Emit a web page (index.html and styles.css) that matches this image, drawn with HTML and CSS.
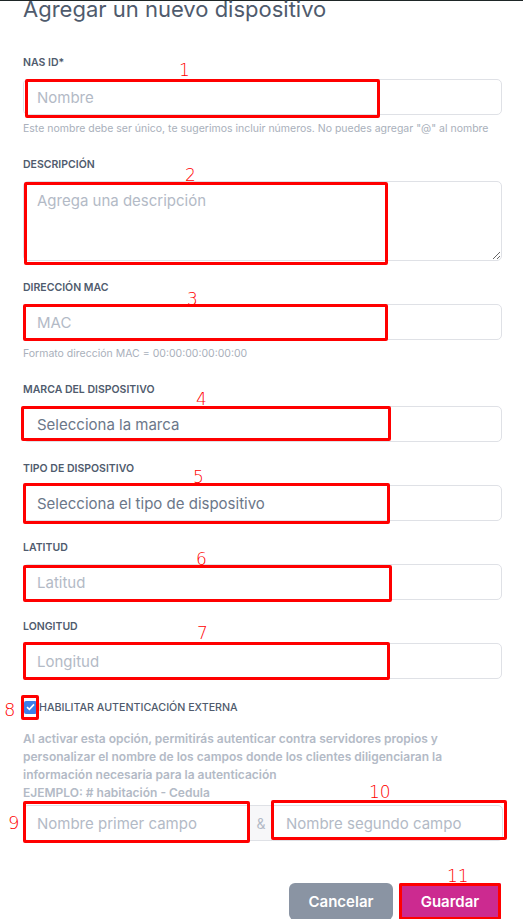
FILE: index.html
```html
<!DOCTYPE html>
<html>
  <head>
    <meta charset="utf-8">
    <title>Agregar un nuevo dispositivo</title>
    <link rel="stylesheet" href="styles.css">
  </head>
  <body>
    <div class="topline"></div>
    <div class="modal">
      <h1 class="title">Agregar un nuevo dispositivo</h1>

      <div class="field">
        <label class="label">NAS ID*</label>
        <div class="control">
          <input class="input" type="text" placeholder="Nombre">
          <span class="mark mark-1"><i>1</i></span>
        </div>
        <p class="help">Este nombre debe ser único, te sugerimos incluir números. No puedes agregar "@" al nombre</p>
      </div>

      <div class="field">
        <label class="label">DESCRIPCIÓN</label>
        <div class="control">
          <textarea class="input textarea" placeholder="Agrega una descripción"></textarea>
          <span class="mark mark-2"><i>2</i></span>
        </div>
      </div>

      <div class="field">
        <label class="label">DIRECCIÓN MAC</label>
        <div class="control">
          <input class="input" type="text" placeholder="MAC">
          <span class="mark mark-3"><i>3</i></span>
        </div>
        <p class="help">Formato dirección MAC = 00:00:00:00:00:00</p>
      </div>

      <div class="field">
        <label class="label">MARCA DEL DISPOSITIVO</label>
        <div class="control">
          <div class="input select">Selecciona la marca</div>
          <span class="mark mark-4"><i>4</i></span>
        </div>
      </div>

      <div class="field">
        <label class="label">TIPO DE DISPOSITIVO</label>
        <div class="control">
          <div class="input select">Selecciona el tipo de dispositivo</div>
          <span class="mark mark-5"><i>5</i></span>
        </div>
      </div>

      <div class="field">
        <label class="label">LATITUD</label>
        <div class="control">
          <input class="input" type="text" placeholder="Latitud">
          <span class="mark mark-6"><i>6</i></span>
        </div>
      </div>

      <div class="field">
        <label class="label">LONGITUD</label>
        <div class="control">
          <input class="input" type="text" placeholder="Longitud">
          <span class="mark mark-7"><i>7</i></span>
        </div>
      </div>

      <div class="check-row">
        <span class="check-wrap">
          <span class="checkbox">
            <svg width="9" height="8" viewBox="0 0 9 8"><path d="M1 4.2 L3.4 6.4 L8 1.4" fill="none" stroke="#fff" stroke-width="1.6"/></svg>
          </span>
          <span class="mark mark-8"><i>8</i></span>
        </span>
        <span class="check-label">HABILITAR AUTENTICACIÓN EXTERNA</span>
      </div>

      <p class="note">Al activar esta opción, permitirás autenticar contra servidores propios y personalizar el nombre de los campos donde los clientes diligenciaran la información necesaria para la autenticación<br>EJEMPLO: # habitación - Cedula</p>

      <div class="group">
        <div class="control group-first">
          <input class="input" type="text" placeholder="Nombre primer campo">
          <span class="mark mark-9"><i>9</i></span>
        </div>
        <span class="addon">&amp;</span>
        <div class="control group-last">
          <input class="input" type="text" placeholder="Nombre segundo campo">
          <span class="mark mark-10"><i>10</i></span>
        </div>
      </div>

      <div class="actions">
        <button class="btn btn-cancel">Cancelar</button>
        <div class="control">
          <button class="btn btn-save">Guardar</button>
          <span class="mark mark-11"><i>11</i></span>
        </div>
      </div>
    </div>
  </body>
</html>
```

FILE: styles.css
```css
* {
  box-sizing: border-box;
}

html, body {
  margin: 0;
  padding: 0;
  background: #fff;
  overflow: hidden;
}

body {
  font-family: Inter, "Open Sans", sans-serif;
  color: #4a5568;
}

.topline {
  height: 1px;
  background: #1e2627;
}

.modal {
  padding: 0 21px 0 23px;
}

.title {
  margin: -6px 0 0;
  font-size: 22px;
  font-weight: 400;
  line-height: 28px;
  color: #4f5b6d;
}

.field {
  margin-bottom: 20px;
}

.field:first-of-type {
  margin-top: 33px;
}

.field-help {
  margin-bottom: 22px;
}

.label {
  display: block;
  font-size: 10.5px;
  font-weight: 600;
  line-height: 14px;
  margin-bottom: 9px;
  color: #4f5b6d;
}

.control {
  position: relative;
}

.input {
  display: block;
  width: 100%;
  height: 36px;
  padding: 0 13px;
  border: 1px solid #dfe1e6;
  border-radius: 5px;
  font-family: inherit;
  font-size: 15px;
  color: #6b7789;
  background: #fff;
  outline: none;
}

.input::placeholder {
  color: #b3bac6;
}

.textarea {
  height: 80px;
  padding-top: 9px;
  resize: vertical;
}

.select {
  display: flex;
  align-items: center;
}

.help {
  margin: 7px 0 0;
  font-size: 10.5px;
  line-height: 14px;
  color: #a9b0bb;
  white-space: nowrap;
}

.field:has(.help) {
  margin-bottom: 22px;
}

/* red annotation frames drawn over the form */
.mark {
  position: absolute;
  border: 3px solid #ff0000;
  border-radius: 2px;
  pointer-events: none;
}

.mark i {
  position: absolute;
  font-style: normal;
  font-family: "DejaVu Sans", sans-serif;
  font-weight: 200;
  font-size: 17px;
  line-height: 17px;
  color: #ff0000;
}

.mark-1 { left: 2px; top: 0; width: 355px; height: 39px; }
.mark-1 i { left: 151px; top: -20px; }
.mark-2 { left: 1px; top: 1px; width: 364px; height: 83px; }
.mark-2 i { left: 158px; top: -18px; }
.mark-3 { left: 0; top: 0; width: 365px; height: 37px; }
.mark-3 i { left: 161px; top: -16px; }
.mark-4 { left: -2px; top: 0; width: 370px; height: 35px; }
.mark-4 i { left: 172px; top: -18px; }
.mark-5 { left: 0; top: -2px; width: 367px; height: 41px; }
.mark-5 i { left: 167px; top: -17px; }
.mark-6 { left: 0; top: 1px; width: 369px; height: 37px; }
.mark-6 i { left: 170px; top: -17px; }
.mark-7 { left: 0; top: -1px; width: 367px; height: 38px; }
.mark-7 i { left: 171px; top: -20px; }
.mark-8 { left: -2px; top: -5px; width: 18px; height: 25px; }
.mark-8 i { left: -20px; top: 3px; font-size: 18px; }
.mark-9 { left: 0; top: -4px; width: 227px; height: 42px; }
.mark-9 i { left: -18px; top: 10px; font-size: 18px; }
.mark-10 { left: -1px; top: -5px; width: 236px; height: 40px; }
.mark-10 i { left: 95px; top: -19px; }
.mark-11 { left: 0; top: 0; width: 102px; height: 37px; }
.mark-11 i { left: 45px; top: -18px; }

.check-row {
  display: flex;
  align-items: center;
  margin-top: 17px;
  height: 16px;
}

.check-wrap {
  position: relative;
  display: inline-block;
  width: 15px;
  height: 15px;
}

.checkbox {
  display: flex;
  align-items: center;
  justify-content: center;
  width: 13px;
  height: 13px;
  margin: 1px 0 0 1px;
  background: #3d7ee8;
  border-radius: 2px;
}

.check-label {
  font-size: 10.7px;
  font-weight: 500;
  color: #4f5b6d;
  margin-left: 1px;
}

.note {
  margin: 15px 0 0;
  font-size: 12px;
  font-weight: 600;
  line-height: 18px;
  color: #b3bac6;
}

.group {
  display: flex;
  margin-top: 3px;
  width: 480px;
}

.group-first {
  width: 227px;
}

.group-first .input {
  border-radius: 5px 0 0 5px;
}

.addon {
  display: flex;
  align-items: center;
  justify-content: center;
  width: 22px;
  height: 36px;
  background: #f7f7f9;
  border-top: 1px solid #dfe1e6;
  border-bottom: 1px solid #dfe1e6;
  font-size: 14px;
  color: #b3bac6;
}

.group-last {
  flex: 1;
}

.group-last .input {
  border-radius: 0 5px 5px 0;
}

.actions {
  display: flex;
  justify-content: flex-end;
  gap: 6px;
  margin-top: 42px;
  padding-right: 1px;
}

.btn {
  display: block;
  height: 37px;
  border: none;
  border-radius: 6px;
  font-family: inherit;
  font-size: 15px;
  font-weight: 600;
  color: #fff;
}

.btn-cancel {
  width: 104px;
  background: #8a94a3;
}

.btn-save {
  width: 102px;
  background: #cc2a90;
  border-radius: 2px;
}
```
